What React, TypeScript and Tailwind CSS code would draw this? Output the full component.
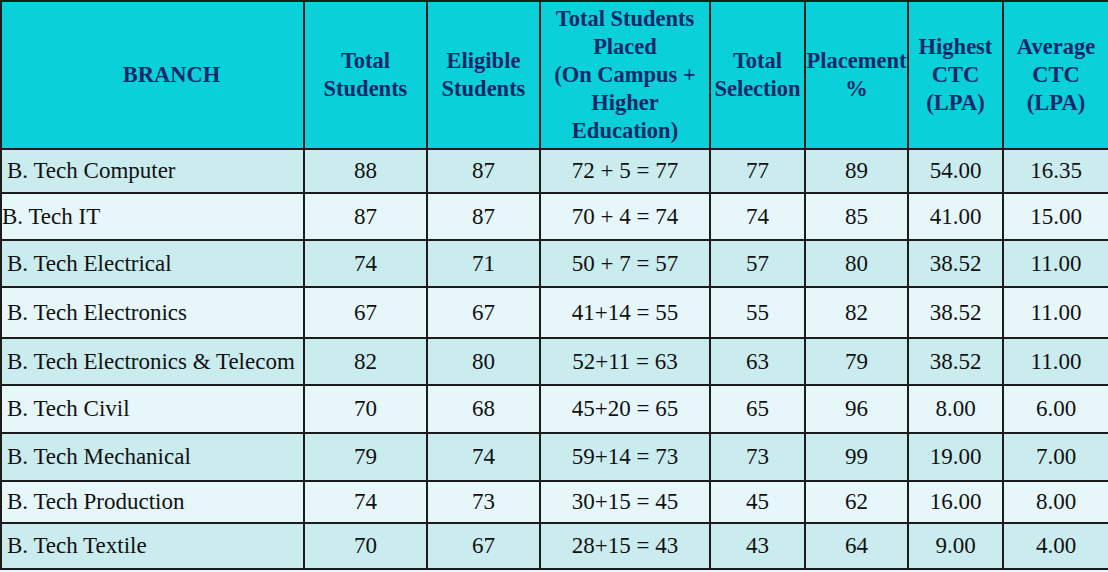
const ROWS = [
  { branch: "B. Tech Computer", total: "88", eligible: "87", placed: "72 + 5 = 77", selection: "77", pct: "89", high: "54.00", avg: "16.35", h: "h-[44px]" },
  { branch: "B. Tech IT", total: "87", eligible: "87", placed: "70 + 4 = 74", selection: "74", pct: "85", high: "41.00", avg: "15.00", h: "h-[47px]", tight: true },
  { branch: "B. Tech Electrical", total: "74", eligible: "71", placed: "50 + 7 = 57", selection: "57", pct: "80", high: "38.52", avg: "11.00", h: "h-[47px]" },
  { branch: "B. Tech Electronics", total: "67", eligible: "67", placed: "41+14 = 55", selection: "55", pct: "82", high: "38.52", avg: "11.00", h: "h-[51px]" },
  { branch: "B. Tech Electronics & Telecom", total: "82", eligible: "80", placed: "52+11 = 63", selection: "63", pct: "79", high: "38.52", avg: "11.00", h: "h-[47px]" },
  { branch: "B. Tech Civil", total: "70", eligible: "68", placed: "45+20 = 65", selection: "65", pct: "96", high: "8.00", avg: "6.00", h: "h-[48px]" },
  { branch: "B. Tech Mechanical", total: "79", eligible: "74", placed: "59+14 = 73", selection: "73", pct: "99", high: "19.00", avg: "7.00", h: "h-[48px]" },
  { branch: "B. Tech Production", total: "74", eligible: "73", placed: "30+15 = 45", selection: "45", pct: "62", high: "16.00", avg: "8.00", h: "h-[42px]" },
  { branch: "B. Tech Textile", total: "70", eligible: "67", placed: "28+15 = 43", selection: "43", pct: "64", high: "9.00", avg: "4.00", h: "h-[46px]" },
];

const th = "border-2 border-[#1c1c1c] p-0 text-center align-middle font-bold text-[22.5px] leading-[28px] text-[#0d2868]";
const td = "border-2 border-[#1c1c1c] px-1 py-0 text-center align-middle text-[23px] leading-[26px] text-[#111]";

export default function App() {
  return (
    <div className="w-[1108px] h-[572px] bg-[#e8f6f9]">
      <table className="table-fixed border-collapse w-[1108px] font-[Liberation_Serif,serif]">
        <colgroup>
          <col className="w-[303px]" />
          <col className="w-[123px]" />
          <col className="w-[113px]" />
          <col className="w-[170px]" />
          <col className="w-[95px]" />
          <col className="w-[103px]" />
          <col className="w-[95px]" />
          <col className="w-[106px]" />
        </colgroup>
        <thead>
          <tr className="h-[148px] bg-[#0ad0da]">
            <th className={`${th} pl-[38px]`}>BRANCH</th>
            <th className={th}>Total<br />Students</th>
            <th className={th}>Eligible<br />Students</th>
            <th className={th}>Total Students<br />Placed<br />(On Campus +<br />Higher<br />Education)</th>
            <th className={th}>Total<br />Selection</th>
            <th className={th}>Placement<br />%</th>
            <th className={th}>Highest<br />CTC<br />(LPA)</th>
            <th className={th}>Average<br />CTC<br />(LPA)</th>
          </tr>
        </thead>
        <tbody>
          {ROWS.map((r, i) => (
            <tr key={r.branch} className={`${r.h} ${i % 2 === 0 ? "bg-[#cbecef]" : "bg-[#e6f6f9]"}`}>
              <td className={`${td} text-left ${r.tight ? "pl-0" : "pl-[5px]"} whitespace-nowrap`}>{r.branch}</td>
              <td className={td}>{r.total}</td>
              <td className={td}>{r.eligible}</td>
              <td className={td}>{r.placed}</td>
              <td className={td}>{r.selection}</td>
              <td className={td}>{r.pct}</td>
              <td className={td}>{r.high}</td>
              <td className={td}>{r.avg}</td>
            </tr>
          ))}
        </tbody>
      </table>
    </div>
  );
}
